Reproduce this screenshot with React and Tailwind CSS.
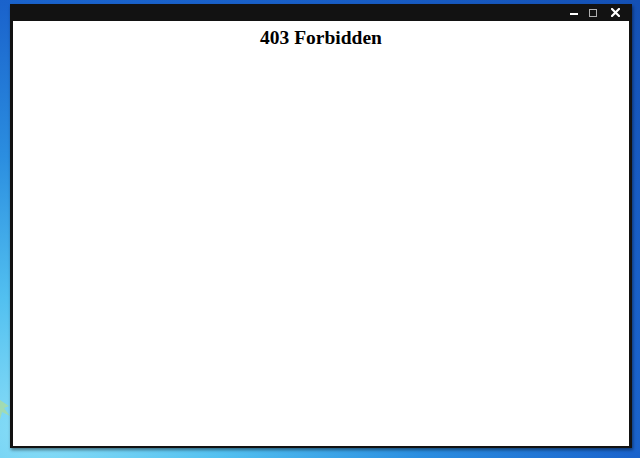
export default function App() {
  return (
    <div className="relative w-[640px] h-[458px] overflow-hidden bg-[radial-gradient(ellipse_at_6%_94%,#8adef7_0%,#52c0f0_22%,#2b8ee0_45%,#1a63cc_70%,#1450b4_100%)] pt-[4px] pl-[10px] pr-[8px] pb-[10px] flex">
      <svg className="absolute left-[0px] top-[392px]" width="14" height="30" viewBox="0 0 14 30">
        <path d="M0 8 L9 14 L4 16 L10 24 L2 20 L0 28 Z" fill="#c8e070" opacity="0.5" />
      </svg>
      <div className="relative flex-1 flex flex-col bg-[#121212] px-[3px] pb-[2px] shadow-[1px_2px_3px_rgba(0,0,0,0.45)]">
        <div className="h-[17px] flex items-center justify-end pr-[9px]">
          <div className="w-[8px] h-[2px] bg-white mt-[2px]" />
          <div className="w-[8px] h-[8px] border border-[#b0b0b0] ml-[11px]" />
          <svg className="ml-[14px]" width="9" height="9" viewBox="0 0 9 9">
            <path d="M1 1 L8 8 M8 1 L1 8" stroke="white" strokeWidth="2.2" strokeLinecap="square" />
          </svg>
        </div>
        <div className="flex-1 bg-white">
          <h1 className="text-center font-bold text-[19.5px] leading-none pt-[7px] text-black font-['Liberation_Serif','Times_New_Roman',serif]">
            403 Forbidden
          </h1>
        </div>
      </div>
    </div>
  );
}
